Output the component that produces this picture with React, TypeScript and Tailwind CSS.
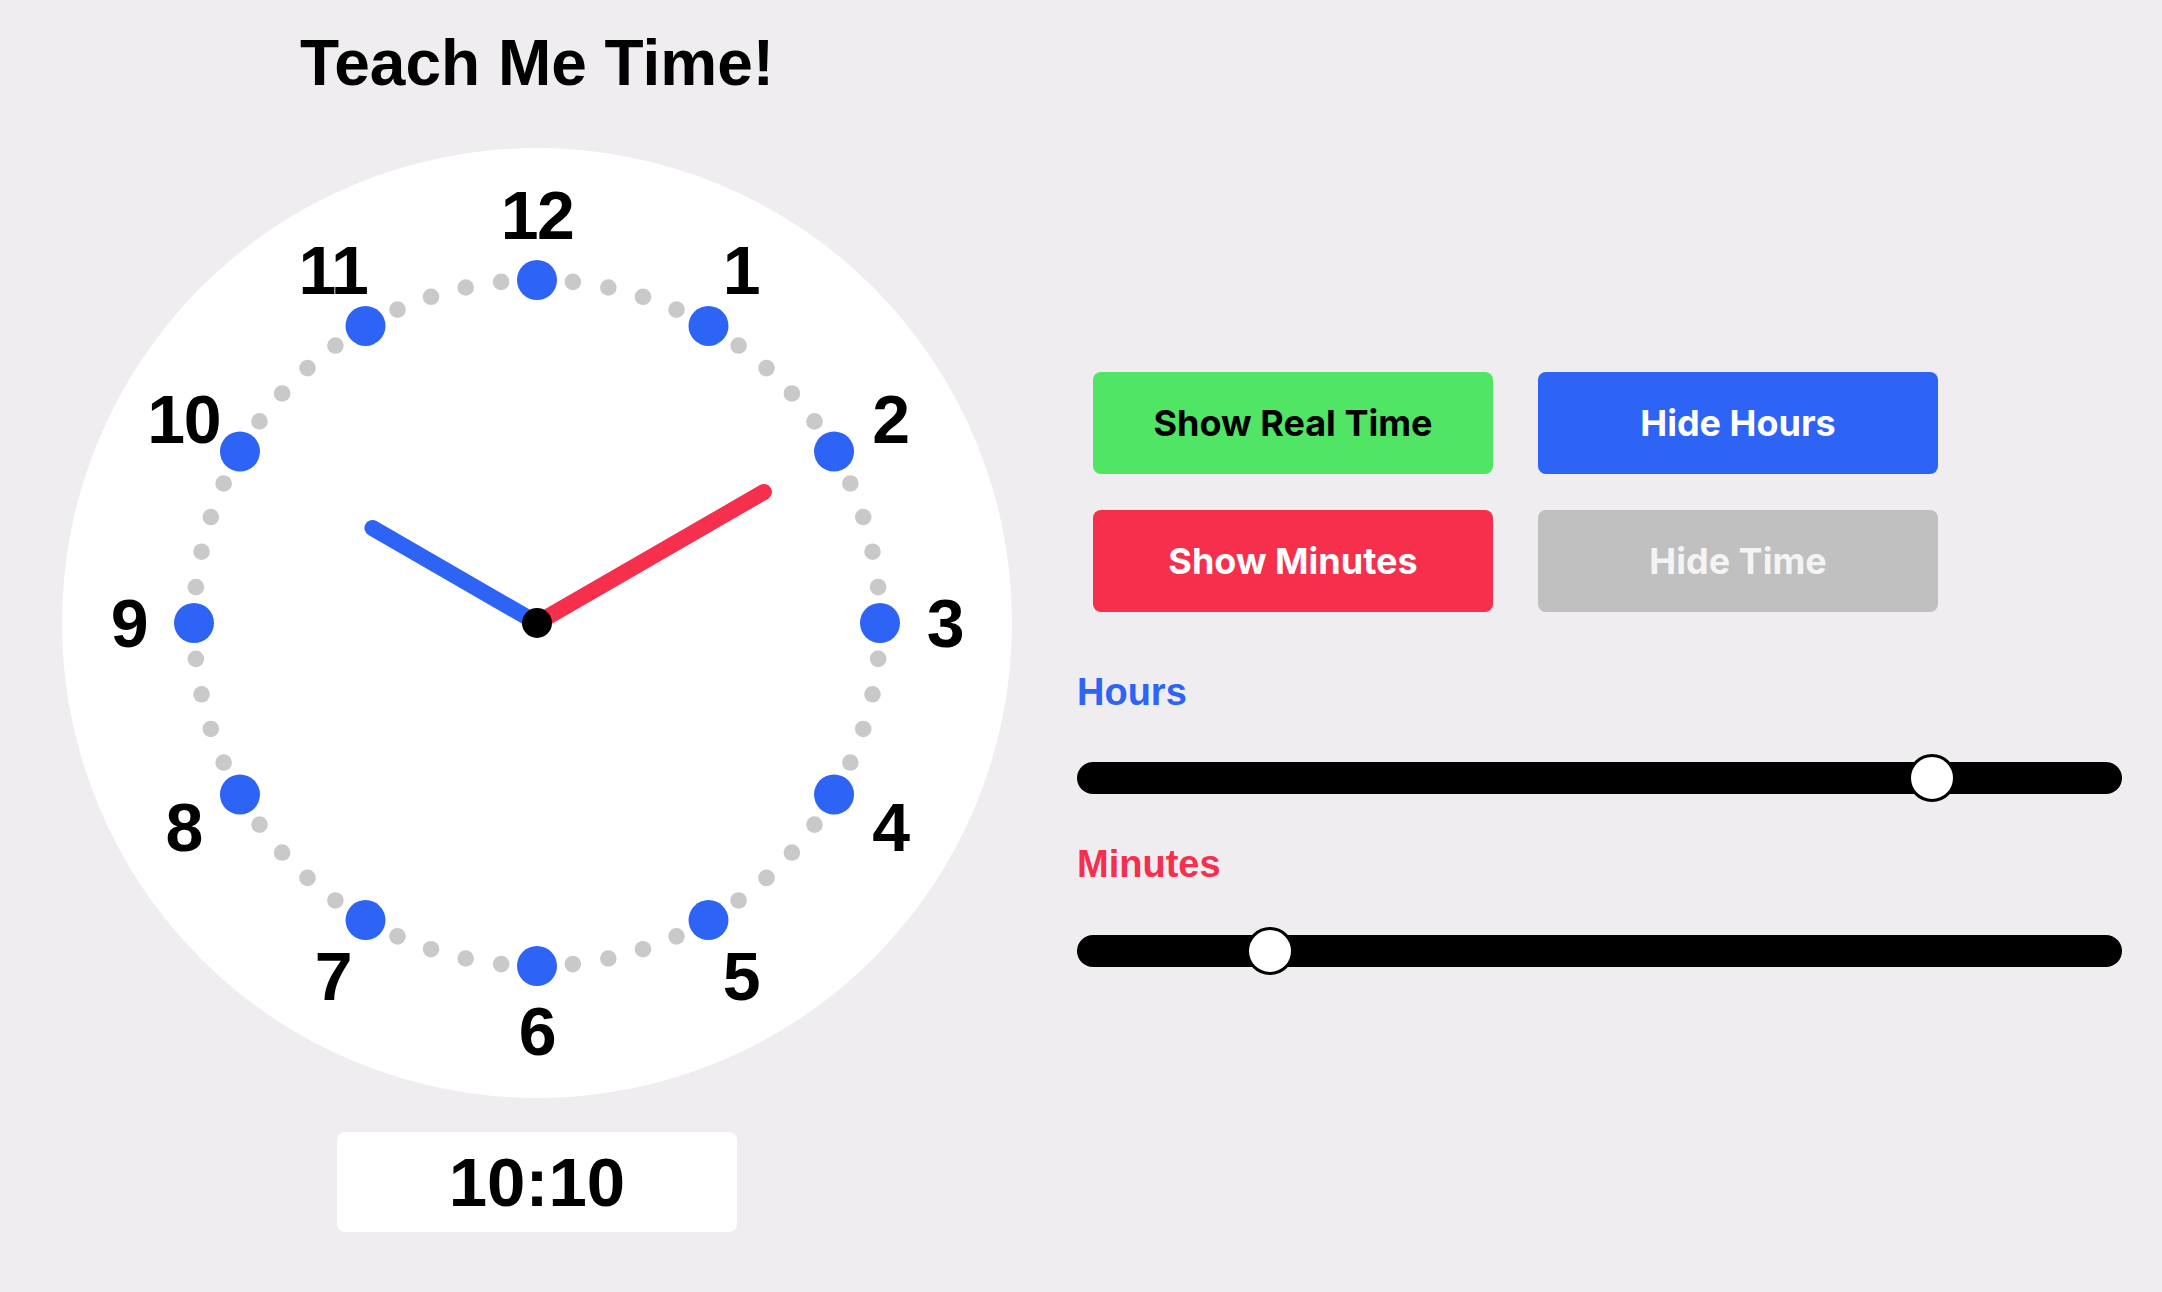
import React from "react";

const BLUE = "#2d64f5";
const RED = "#f52f4c";

function Clock({ hours, minutes }: { hours: number; minutes: number }) {
  const c = 475;
  const dots = Array.from({ length: 60 }).map((_, i) => {
    const a = (i * 6 * Math.PI) / 180;
    const x = c + 343 * Math.sin(a);
    const y = c - 343 * Math.cos(a);
    return i % 5 === 0 ? (
      <circle key={i} cx={x} cy={y} r={20} fill={BLUE} />
    ) : (
      <circle key={i} cx={x} cy={y} r={8.3} fill="#c9c9c9" />
    );
  });
  const nums = Array.from({ length: 12 }).map((_, i) => {
    const n = i + 1;
    const a = (n * 30 * Math.PI) / 180;
    const x = c + 408 * Math.sin(a);
    const y = c - 408 * Math.cos(a);
    return (
      <text
        key={n}
        x={x}
        y={y + 24}
        textAnchor="middle"
        fontFamily="'Liberation Sans', Arial, sans-serif"
        fontWeight={700}
        fontSize={68}
        letterSpacing={-1.5}
        fill="#000"
      >
        {n}
      </text>
    );
  });
  const ha = ((hours % 12) * 30 * Math.PI) / 180;
  const ma = (minutes * 6 * Math.PI) / 180;
  return (
    <svg width={950} height={950} viewBox="0 0 950 950" className="block">
      <circle cx={c} cy={c} r={475} fill="#fff" />
      {dots}
      {nums}
      <line
        x1={c}
        y1={c}
        x2={c + 190 * Math.sin(ha)}
        y2={c - 190 * Math.cos(ha)}
        stroke={BLUE}
        strokeWidth={16}
        strokeLinecap="round"
      />
      <line
        x1={c}
        y1={c}
        x2={c + 262 * Math.sin(ma)}
        y2={c - 262 * Math.cos(ma)}
        stroke={RED}
        strokeWidth={16}
        strokeLinecap="round"
      />
      <circle cx={c} cy={c} r={15} fill="#000" />
    </svg>
  );
}

function Slider({ value, min, max }: { value: number; min: number; max: number }) {
  const left = ((value - min) / (max - min)) * (1045 - 48);
  return (
    <div className="relative h-[32px] w-[1045px] rounded-full bg-black">
      <div
        className="absolute top-1/2 h-[48px] w-[48px] -translate-y-1/2 rounded-full border-[3px] border-black bg-white"
        style={{ left }}
      />
    </div>
  );
}

export default function App() {
  const hours = 10;
  const minutes = 10;
  const btn =
    "flex h-[102px] w-[400px] items-center justify-center rounded-[8px] text-[36px] font-bold font-['Inter',sans-serif]";
  return (
    <div className="flex min-h-screen w-full bg-[#efedf0] font-['Liberation_Sans',Arial,sans-serif]">
      <div className="ml-[62px] flex w-[950px] flex-col items-center">
        <h1 className="mt-[31px] text-[64px] font-bold leading-none text-black">
          Teach Me Time!
        </h1>
        <div className="mt-[53px]">
          <Clock hours={hours} minutes={minutes} />
        </div>
        <div className="mt-[34px] flex h-[100px] w-[400px] items-center justify-center rounded-[8px] bg-white">
          <span className="text-[69px] font-bold leading-none text-black">
            {hours}:{minutes.toString().padStart(2, "0")}
          </span>
        </div>
      </div>
      <div className="ml-[65px] flex flex-col pt-[372px]">
        <div className="ml-[16px] grid grid-cols-[400px_400px] gap-x-[45px] gap-y-[36px]">
          <button className={`${btn} bg-[#50e564] text-black`}>Show Real Time</button>
          <button className={`${btn} bg-[#2d64f5] text-white`}>Hide Hours</button>
          <button className={`${btn} bg-[#f52f4c] text-white`}>Show Minutes</button>
          <button className={`${btn} bg-[#c0c0c0] text-[#f4f4f4]`}>Hide Time</button>
        </div>
        <div className="mt-[61px] text-[38px] font-bold leading-none text-[#2d64f5]">Hours</div>
        <div className="mt-[51px]">
          <Slider value={hours} min={0} max={12} />
        </div>
        <div className="mt-[51px] text-[38px] font-bold leading-none text-[#f52f4c]">Minutes</div>
        <div className="mt-[52px]">
          <Slider value={minutes} min={0} max={59} />
        </div>
      </div>
    </div>
  );
}
